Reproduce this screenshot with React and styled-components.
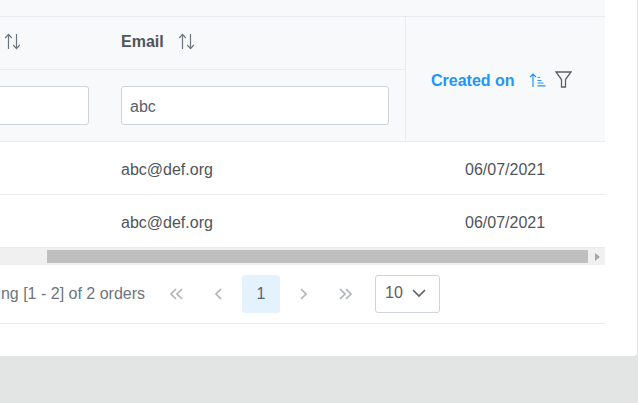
import React from 'react'
import styled, { createGlobalStyle } from 'styled-components'

const GlobalStyle = createGlobalStyle`
  html, body {
    margin: 0;
    padding: 0;
    background: #e3e5e4;
  }
  * {
    box-sizing: border-box;
  }
`

const Page = styled.div`
  width: 638px;
  height: 403px;
  overflow: hidden;
  background: #e3e5e4;
  font-family: 'Liberation Sans', Arial, sans-serif;
  font-size: 16px;
  color: #4f555b;
`

const Card = styled.div`
  width: 637px;
  height: 356px;
  background: #ffffff;
  border-bottom-right-radius: 4px;
  overflow: hidden;
`

const TableArea = styled.div`
  width: 605px;
`

const TopStrip = styled.div`
  height: 17px;
  background: #f8f9fa;
  border-bottom: 1px solid #e9ecef;
`

const Grid = styled.div`
  display: grid;
  grid-template-columns: 105px 300px 200px;
  grid-template-rows: 53px 72px 53px 53px;
`

const HeadCell = styled.div`
  display: flex;
  align-items: center;
  justify-content: ${(p) => (p.$clipped ? 'flex-end' : 'flex-start')};
  gap: 14px;
  padding: ${(p) => (p.$clipped ? '0 84px 3px 0' : '0 16px 3px')};
  background: #f8f9fa;
  border-bottom: 1px solid #e9ecef;
  font-weight: 700;
  overflow: hidden;
`

const FilterCell = styled.div`
  display: flex;
  align-items: center;
  justify-content: flex-end;
  padding: 0 16px;
  background: #f8f9fa;
  border-bottom: 1px solid #e9ecef;
  overflow: hidden;
`

const FilterInput = styled.input`
  flex: none;
  width: ${(p) => p.$width}px;
  height: 39px;
  padding: 2px 8px 0;
  background: #ffffff;
  border: 1px solid #ced4da;
  border-radius: 3px;
  font-family: inherit;
  font-size: 16px;
  color: #5a6068;
  outline: none;
`

const SortedHead = styled.div`
  grid-area: 1 / 3 / 3 / 4;
  display: flex;
  align-items: center;
  padding-left: 25px;
  background: #f8f9fa;
  border-left: 1px solid #e9ecef;
  border-bottom: 1px solid #e9ecef;
  font-weight: 700;
  color: #2196f3;
`

const SortedLabel = styled.span`
  margin-top: 4px;
`

const SortedIcon = styled.svg`
  margin: 2px 0 0 14px;
  flex: none;
`

const FilterIcon = styled.svg`
  margin-left: 9px;
  flex: none;
`

const Cell = styled.div`
  display: flex;
  align-items: center;
  padding: ${(p) => (p.$date ? '4px 0 0 60px' : '4px 16px 0')};
  border-bottom: 1px solid #e9ecef;
  background: #ffffff;
`

const Scrollbar = styled.div`
  display: flex;
  align-items: center;
  height: 17px;
  background: #f0f0f0;
`

const Thumb = styled.div`
  width: 541px;
  height: 13px;
  margin-left: 47px;
  background: #bfbfbf;
`

const ScrollArrow = styled.div`
  width: 0;
  height: 0;
  margin-left: 7px;
  border-left: 5px solid #a4a8b0;
  border-top: 4px solid transparent;
  border-bottom: 4px solid transparent;
`

const Pager = styled.div`
  display: flex;
  align-items: center;
  justify-content: flex-end;
  height: 59px;
  padding-right: 165px;
  border-bottom: 1px solid #e9ecef;
  color: #6c757d;
  white-space: nowrap;
  overflow: hidden;
`

const PagerSummary = styled.span`
  flex: none;
  margin-right: 13px;
`

const PageButton = styled.button`
  flex: none;
  display: flex;
  align-items: center;
  justify-content: center;
  width: 38px;
  height: 38px;
  margin-right: 4px;
  padding: 0;
  background: ${(p) => (p.$active ? '#e3f2fd' : 'transparent')};
  border: none;
  border-radius: 3px;
  font-family: inherit;
  font-size: 16px;
  color: ${(p) => (p.$active ? '#5a6570' : '#b0b4b8')};
`

const PageSize = styled.div`
  flex: none;
  display: flex;
  align-items: center;
  justify-content: space-between;
  width: 65px;
  height: 38px;
  margin-left: 7px;
  padding: 0 12px 2px 9px;
  background: #ffffff;
  border: 1px solid #ced4da;
  border-radius: 3px;
  color: #5a6068;
`

const SortIcon = () => (
  <svg width="17" height="17" viewBox="0 0 17 17" fill="none" stroke="#6c757d" strokeWidth="1.2">
    <path d="M4.500 16V1.500M1.200 5l3.300-3.600L7.800 5" />
    <path d="M12.500 1v14.500M9.200 12l3.300 3.600 3.300-3.600" />
  </svg>
)

const SortAscIcon = () => (
  <SortedIcon width="17" height="14" viewBox="0 0 17 14" fill="none" stroke="#2196f3" strokeWidth="1.2">
    <path d="M4 14V1M1 4l3-3 3 3" />
    <path d="M8.500 4.500h2.500M8.500 7.500h4M8.500 10h6M8.500 12.800h8" />
  </SortedIcon>
)

const Funnel = () => (
  <FilterIcon width="17" height="17" viewBox="0 0 17 17" fill="none" stroke="#5a6068" strokeWidth="1.3">
    <path d="M1 1h15l-5.500 7.500V16h-4V8.500z" />
  </FilterIcon>
)

const Chevron = ({ dir, double }) => (
  <svg width="16" height="12" viewBox="0 0 16 12" fill="none" stroke="currentColor" strokeWidth="1.7">
    {dir === 'left' ? (
      <>
        <path d={double ? 'M7 1 2 6l5 5' : 'M10 1 5 6l5 5'} />
        {double && <path d="M13 1 8 6l5 5" />}
      </>
    ) : (
      <>
        <path d={double ? 'M3 1l5 5-5 5' : 'M6 1l5 5-5 5'} />
        {double && <path d="M9 1l5 5-5 5" />}
      </>
    )}
  </svg>
)

const rows = [
  { email: 'abc@def.org', created: '06/07/2021' },
  { email: 'abc@def.org', created: '06/07/2021' },
]

export default function App() {
  return (
    <Page>
      <GlobalStyle />
      <Card>
        <TableArea>
          <TopStrip />
          <Grid>
            <HeadCell $clipped>
              <SortIcon />
            </HeadCell>
            <HeadCell>
              Email
              <SortIcon />
            </HeadCell>
            <SortedHead>
              <SortedLabel>Created on</SortedLabel>
              <SortAscIcon />
              <Funnel />
            </SortedHead>
            <FilterCell>
              <FilterInput $width={200} defaultValue="" />
            </FilterCell>
            <FilterCell>
              <FilterInput $width={268} defaultValue="abc" />
            </FilterCell>
            {rows.map((row, i) => (
              <React.Fragment key={i}>
                <Cell />
                <Cell>{row.email}</Cell>
                <Cell $date>{row.created}</Cell>
              </React.Fragment>
            ))}
          </Grid>
          <Scrollbar>
            <Thumb />
            <ScrollArrow />
          </Scrollbar>
          <Pager>
            <PagerSummary>Showing [1 - 2] of 2 orders</PagerSummary>
            <PageButton>
              <Chevron dir="left" double />
            </PageButton>
            <PageButton>
              <Chevron dir="left" />
            </PageButton>
            <PageButton $active>1</PageButton>
            <PageButton>
              <Chevron dir="right" />
            </PageButton>
            <PageButton>
              <Chevron dir="right" double />
            </PageButton>
            <PageSize>
              10
              <svg width="16" height="10" viewBox="0 0 16 10" fill="none" stroke="#5a6068" strokeWidth="1.6">
                <path d="M2 2l6 6 6-6" />
              </svg>
            </PageSize>
          </Pager>
        </TableArea>
      </Card>
    </Page>
  )
}
